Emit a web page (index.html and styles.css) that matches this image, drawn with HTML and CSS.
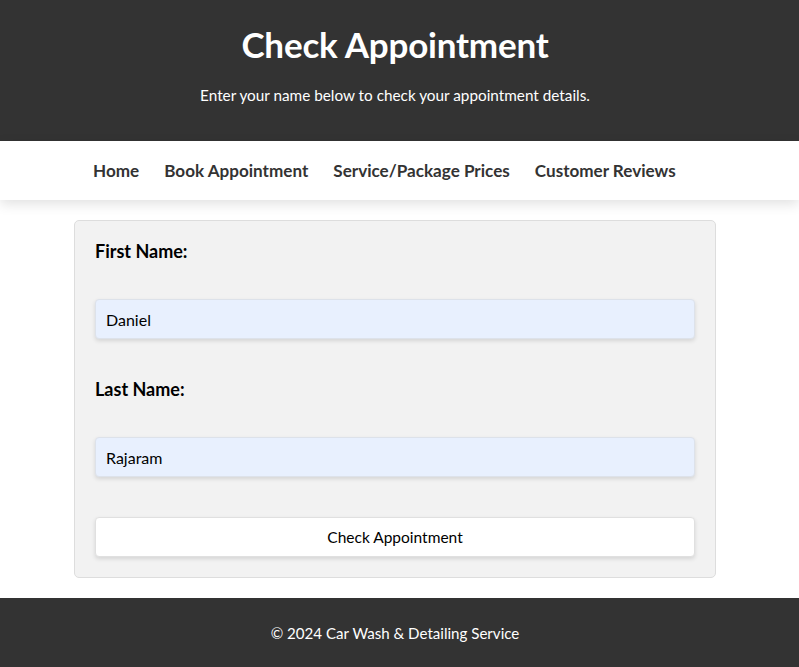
FILE: index.html
```html
<!DOCTYPE html>
<html lang="en">
<head>
<meta charset="utf-8">
<title>Check Appointment</title>
<link rel="stylesheet" href="styles.css">
</head>
<body>
<header class="site-header">
  <h1 class="title">Check Appointment</h1>
  <p class="subtitle">Enter your name below to check your appointment details.</p>
</header>
<nav class="site-nav">
  <a href="#" class="nav-link">Home</a>
  <a href="#" class="nav-link">Book Appointment</a>
  <a href="#" class="nav-link">Service/Package Prices</a>
  <a href="#" class="nav-link">Customer Reviews</a>
</nav>
<main class="main">
  <form class="check-form">
    <label class="field-label" for="first">First Name:</label>
    <input class="field-input" id="first" type="text" value="Daniel">
    <label class="field-label" for="last">Last Name:</label>
    <input class="field-input" id="last" type="text" value="Rajaram">
    <button class="submit-btn" type="button">Check Appointment</button>
  </form>
</main>
<footer class="site-footer">
  <p class="footer-text">&copy; 2024 Car Wash &amp; Detailing Service</p>
</footer>
</body>
</html>
```
FILE: styles.css
```css
* { box-sizing: border-box; }
html, body { margin: 0; padding: 0; }
body {
  font-family: Lato, "Open Sans", sans-serif;
  background: #fff;
  color: #000;
  font-size: 16px;
}
.site-header {
  background: #333;
  color: #fff;
  height: 141px;
  padding: 23px 9px 0 0;
  text-align: center;
}
.title {
  margin: 0;
  font-size: 35px;
  font-weight: 700;
  letter-spacing: -0.2px;
  line-height: 42px;
}
.subtitle {
  margin: 20px 0 0;
  font-size: 15.3px;
  line-height: 20px;
}
.site-nav {
  background: #fff;
  height: 59px;
  display: flex;
  align-items: center;
  gap: 25px;
  padding-left: 93px;
  box-shadow: 0 4px 12px rgba(0,0,0,0.12);
  position: relative;
}
.nav-link {
  color: #333;
  text-decoration: none;
  font-weight: 700;
  font-size: 17.1px;
}
.main {
  padding: 20px 83px 20px 74px;
}
.check-form {
  width: 642px;
  background: #f2f2f2;
  border: 1px solid #ddd;
  border-radius: 5px;
  padding: 20px;
  display: flex;
  flex-direction: column;
}
.field-label {
  font-weight: 700;
  font-size: 18px;
  line-height: 20px;
  margin-bottom: 38px;
}
.field-input {
  height: 40px;
  border: 1px solid #dde2ea;
  border-radius: 4px;
  background: #e8f0fe;
  padding: 0 10px;
  font-family: inherit;
  font-size: 16px;
  color: #000;
  box-shadow: 0 2px 4px rgba(0,0,0,0.12);
  margin-bottom: 40px;
}
.submit-btn {
  height: 40px;
  border: 1px solid #e0e0e0;
  border-radius: 4px;
  background: #fff;
  font-family: inherit;
  font-size: 15.5px;
  color: #000;
  box-shadow: 0 2px 4px rgba(0,0,0,0.12);
}
.site-footer {
  background: #333;
  color: #fff;
  height: 69px;
  display: flex;
  align-items: center;
  justify-content: center;
  padding-right: 9px;
}
.footer-text {
  margin: 0;
  font-size: 15.1px;
}
```
